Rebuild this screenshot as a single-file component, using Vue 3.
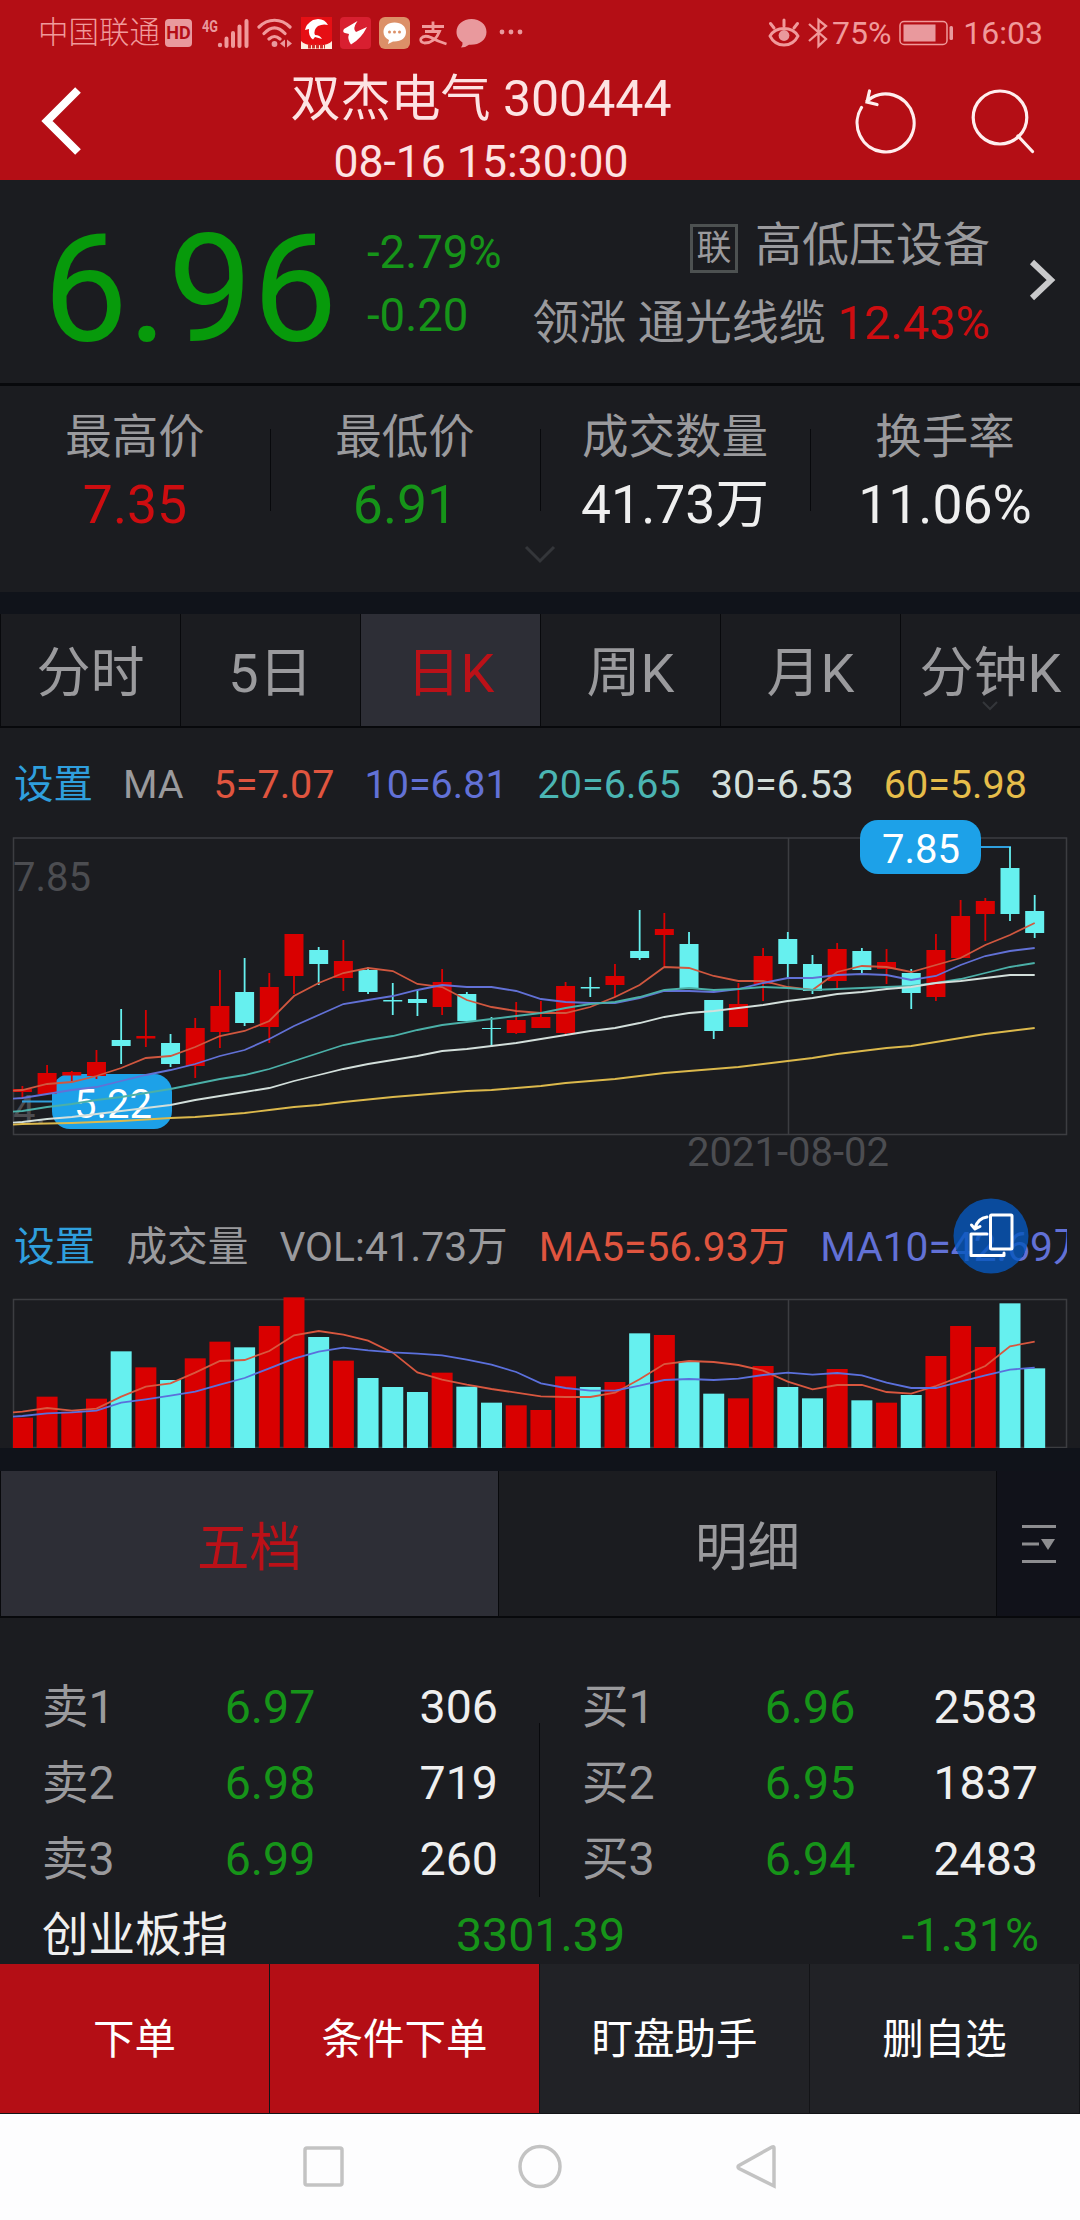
<template>
  <div class="phone">
    <div class="status">
      <span class="carrier">中国联通</span>
      <span class="hd">HD</span>
      <svg class="signal" width="47" height="32" viewBox="0 0 47 32">
        <text x="0" y="15" font-size="17" font-weight="700" textLength="16" lengthAdjust="spacingAndGlyphs">4G</text>
        <circle cx="18" cy="28" r="2.2" />
        <path d="M24.5 29V21.500M31 29V16M37.500 29V9.500M44.500 29V4" stroke-width="4" stroke-linecap="round" class="line" />
      </svg>
      <svg class="wifi" width="36" height="32" viewBox="0 0 36 32">
        <path d="M2 10C11 1 24 1 33 10M7 16.500C14 9 21 9 28 16.500M12 22C16 18.500 19 18.500 23 22" class="line" stroke-width="3.200" stroke-linecap="round" />
        <circle cx="17.500" cy="27" r="2.900" />
        <path d="M23 26.500l5-4v8zM35 26.500l-5-4v8z" />
      </svg>
      <svg width="31" height="32" viewBox="0 0 31 32">
        <rect width="31" height="32" fill="#e60f14" />
        <path d="M0 24Q4 29 15.500 28Q27 29 31 24V32H0z" fill="#fdeee0" />
        <path d="M27 8Q24 2 17 2L12 3Q5 7 4 13L8 12Q7 19 12 22.500L14 20L21 22Q19 18 14 18Q12 13 17 9Q22 6.500 27 8z" fill="#fff" />
        <path d="M7 29.500H24" stroke="#d3302b" stroke-width="4" stroke-dasharray="3 1" />
      </svg>
      <svg width="31" height="32" viewBox="0 0 31 32">
        <rect width="31" height="32" rx="4" fill="#d81f30" />
        <path d="M17.500 4L4 12Q2 15 5 16L9 17Q7 22 11 27.500Q21 22 27 10L16 15Q12 12 17.500 4z" fill="#fff" />
      </svg>
      <svg width="31" height="32" viewBox="0 0 31 32">
        <rect width="31" height="32" rx="6" fill="#dc9068" />
        <path d="M15.500 5.500C8.500 5.500 4.500 9.500 4.500 15C4.500 18.500 6.500 21.500 10 23L9 27L14 24.500C22 25 27 21 27 15C27 9.500 22.500 5.500 15.500 5.500z" fill="#fff" />
        <g fill="#dc9068"><circle cx="10.500" cy="15" r="1.500" /><circle cx="15.500" cy="15" r="1.500" /><circle cx="20.500" cy="15" r="1.500" /></g>
      </svg>
      <svg width="30" height="32" viewBox="0 0 30 32">
        <path d="M4 9.500H26M15 4.500V14M7 14.500H21.500Q17 26 6.500 26Q1.500 25 3 21.500Q6 17.500 13 20.500Q20 24.500 28.500 27" class="line" stroke-width="2.800" />
      </svg>
      <svg width="31" height="32" viewBox="0 0 31 32">
        <path d="M15.500 2C7 2 0.500 7.500 0.500 15C0.500 19.500 3 23 6.500 25.500Q7 28 5 30.500Q10 30.500 13 27.800C23 28.500 30.500 23 30.500 15C30.500 7.500 24 2 15.500 2z" />
      </svg>
      <svg class="more" width="25" height="32" viewBox="0 0 25 32">
        <circle cx="3" cy="15" r="2.400" /><circle cx="12" cy="15" r="2.400" /><circle cx="21" cy="15" r="2.400" />
      </svg>
      <div class="status-right">
        <svg width="32" height="32" viewBox="0 0 32 32">
          <path d="M2 19C8 9 24 9 30 19C24 31 8 31 2 19z" class="line" stroke-width="2.800" />
          <circle cx="16" cy="18.500" r="5.400" />
          <path d="M16 9V3M6 11L2.500 6.500M26 11L29.500 6.500" class="line" stroke-width="3" stroke-linecap="round" />
        </svg>
        <svg class="bt" width="20" height="32" viewBox="0 0 20 32">
          <path d="M1 7L18 22L10.500 29V3L18 9L1 24" class="line" stroke-width="2.300" />
        </svg>
        <span>75%</span>
        <svg class="battery" width="55" height="32" viewBox="0 0 55 32">
          <rect x="1" y="4.500" width="47" height="23" rx="4" class="line" stroke-width="1.500" />
          <rect x="4.500" y="7.500" width="32" height="17" />
          <rect x="50.500" y="9" width="3.500" height="14" rx="1.500" />
        </svg>
        <span>16:03</span>
      </div>
    </div>

    <header class="header">
      <svg class="back" width="44" height="72" viewBox="0 0 44 72">
        <path d="M37 5L6 36L37 67" stroke="#fff" stroke-width="8" fill="none" />
      </svg>
      <div class="title">
        <div class="name">双杰电气 300444</div>
        <div class="time">08-16 15:30:00</div>
      </div>
      <div class="tools">
        <svg width="62" height="66" viewBox="0 0 62 66">
          <path d="M6.500 18.500A28.500 29 0 1 0 12 12M14.500 2L12 13L22 15.500" />
        </svg>
        <svg width="64" height="66" viewBox="0 0 64 66">
          <ellipse cx="29" cy="28.500" rx="26.800" ry="26.500" /><path d="M47 47L61.500 62.500" />
        </svg>
      </div>
    </header>

    <section class="quote">
      <div class="price">6.96</div>
      <div class="change">
        <div>-2.79%</div>
        <div>-0.20</div>
      </div>
      <div class="sector">
        <div class="sector-row"><span class="tag">联</span>高低压设备</div>
        <div class="sector-row">领涨 通光线缆 <span class="red">12.43%</span></div>
      </div>
      <svg class="go" width="28" height="42" viewBox="0 0 28 42">
        <path d="M3 3L22 21L3 39" fill="none" stroke="#c9c9cb" stroke-width="6" />
      </svg>
    </section>

    <section class="stats">
      <div v-for="s in stats" :key="s.label" class="stat">
        <div class="label">{{ s.label }}</div>
        <div class="value" :class="s.tone">{{ s.value }}</div>
      </div>
      <svg class="expand" width="34" height="20" viewBox="0 0 34 20">
        <path d="M3 3L17 17L31 3" fill="none" stroke="#34363a" stroke-width="3" />
      </svg>
    </section>

    <nav class="periods">
      <div v-for="p in periods" :key="p" class="period" :class="{ active: p === '日K' }">
        {{ p }}
        <svg v-if="p === '分钟K'" class="caret" width="16" height="10" viewBox="0 0 16 10">
          <path d="M1 1L8 8L15 1" fill="none" stroke="#34363a" stroke-width="2" />
        </svg>
      </div>
    </nav>

    <div class="legend">
      <span class="set">设置</span>
      <span class="gray">MA</span>
      <span class="ma5">5=7.07</span>
      <span class="ma10">10=6.81</span>
      <span class="ma20">20=6.65</span>
      <span class="ma30">30=6.53</span>
      <span class="ma60">60=5.98</span>
    </div>
    <svg class="chart" width="1080" height="370" viewBox="0 0 1080 370">
      <path d="M13.500 18H1066.500V314.500H13.500zM788.500 18V314" class="frame" />
      <text x="13" y="71" class="axis">7.85</text>
      <text x="13" y="304" class="axis">4.</text>
      <text x="788" y="346" text-anchor="middle" class="axis">2021-08-02</text>
      <rect x="52" y="254" width="120" height="55" rx="18" class="bubble" />
      <path d="M22 281.500H52M981 27H1011" class="lead" />
      <g v-for="(c, i) in candles" :key="i" :fill="c[0] ? red : cyan">
        <rect :x="cx(i) - 0.9" :y="c[1]" width="1.800" :height="c[4] - c[1]" />
        <rect :x="cx(i) - 9.500" :y="c[2]" width="19" :height="c[3] - c[2]" />
      </g>
      <text x="113" y="298" text-anchor="middle" class="mark">5.22</text>
      <polyline v-for="l in priceLines" :key="l.color" :points="points(l.y)" :stroke="l.color" class="curve" />
      <rect x="860" y="0" width="121" height="54" rx="18" class="bubble" />
      <text x="921" y="43" text-anchor="middle" class="mark">7.85</text>
    </svg>

    <div class="legend volume">
      <span class="set">设置</span>
      <span class="gray">成交量</span>
      <span class="gray">VOL:41.73万</span>
      <span class="ma5">MA5=56.93万</span>
      <span class="ma10">MA10=42.69万</span>
      <svg class="rotate" width="76" height="76" viewBox="0 0 76 76">
        <circle cx="38" cy="38" r="37.500" fill="#0658bd" fill-opacity="0.800" />
        <g fill="none" stroke="#fff" stroke-width="3" stroke-linejoin="round" stroke-linecap="round">
          <rect x="37.500" y="17" width="21.500" height="34" rx="1" />
          <path d="M34 36H18V57.500H51V55" />
          <path d="M34 19Q25 20 22 30M18.500 27L22 31L27 28.500" />
        </g>
      </svg>
    </div>
    <svg class="chart" width="1080" height="158" viewBox="0 0 1080 158">
      <path d="M13.500 9.500H1066.500V157.500H13.500zM788.500 9.500V157" class="frame" />
      <rect
        v-for="(v, i) in volumes"
        :key="i"
        :x="Math.max(cx(i) - 10.5, 13)"
        :y="v / 3 - 100"
        :width="i ? 21 : 20"
        :height="258 - v / 3"
        :fill="candles[i][0] ? red : cyan"
      />
      <polyline v-for="l in volumeLines" :key="l.color" :points="points(l.y.map(y => y / 3 - 100))" :stroke="l.color" class="curve" />
    </svg>

    <nav class="book-tabs">
      <div class="book-tab active">五档</div>
      <div class="book-tab">明细</div>
      <div class="book-menu">
        <svg width="36" height="40" viewBox="0 0 36 40">
          <path d="M1 2.500H35M1 20H18M1 37.500H35" stroke="#8d8d90" stroke-width="3" />
          <path d="M20 15H34L27 26z" fill="#8d8d90" />
        </svg>
      </div>
    </nav>

    <section class="book">
      <div v-for="side in book" :key="side.name" class="side">
        <div v-for="(row, i) in side.rows" :key="i" class="row">
          <span class="level">{{ side.name }}{{ i + 1 }}</span>
          <span class="green bid">{{ row[0] }}</span>
          <span class="qty">{{ row[1] }}</span>
        </div>
      </div>
    </section>
    <div class="index">
      <span>创业板指</span>
      <span class="green">3301.39</span>
      <span class="green last">-1.31%</span>
    </div>

    <footer class="actions">
      <div class="action hot">下单</div>
      <div class="action hot">条件下单</div>
      <div class="action">盯盘助手</div>
      <div class="action">删自选</div>
    </footer>
    <div class="sysnav">
      <svg width="44" height="46" viewBox="0 0 44 46"><rect x="3" y="4" width="37" height="37" rx="2" /></svg>
      <svg width="44" height="46" viewBox="0 0 44 46"><circle cx="22" cy="22.500" r="20" /></svg>
      <svg width="44" height="46" viewBox="0 0 44 46"><path d="M40 3.500V42L5 24.500Q3 23 5 21.500L38 3Q40 2 40 4z" /></svg>
    </div>
  </div>
</template>

<script setup>
const red = '#d90000';
const cyan = '#66f0ef';

const stats = [
  { label: '最高价', value: '7.35', tone: 'red' },
  { label: '最低价', value: '6.91', tone: 'green' },
  { label: '成交数量', value: '41.73万' },
  { label: '换手率', value: '11.06%' },
];

const periods = ['分时', '5日', '日K', '周K', '月K', '分钟K'];

// [up, high, bodyTop, bodyBottom, low]
const candles = [
  [1, 266, 269, 272, 279], [1, 245, 253, 274, 274], [1, 251, 252, 255.5, 261], [1, 230, 242, 256, 259],
  [0, 189, 220, 226, 244], [1, 190, 216, 218.5, 227], [0, 214, 223, 244, 247], [1, 198, 208, 246, 258],
  [1, 150, 186, 212, 228], [0, 138, 172, 203, 206], [1, 153, 167, 207, 223], [1, 114, 114, 156, 174],
  [0, 127, 130, 144, 165], [1, 120, 141, 158, 171], [0, 147, 150, 172, 174], [0, 163, 180, 181.5, 195],
  [0, 170, 179, 183, 196], [1, 149, 162, 187, 195], [0, 172, 174, 201, 201], [0, 197, 208, 209, 227],
  [1, 182, 200, 213, 214], [1, 181, 197, 208, 208], [1, 162, 166, 213, 215], [0, 157, 167, 168.5, 177],
  [1, 144, 156, 165, 177], [0, 90, 131, 138, 140], [1, 93, 109, 115, 146], [0, 112, 124, 168, 168],
  [0, 180, 180, 211, 219], [1, 163, 184, 207, 207], [1, 128, 136, 164, 181], [0, 112, 119, 144, 158],
  [0, 135, 144, 171, 174], [1, 123, 129, 161, 168], [0, 128, 131, 150, 155], [1, 129, 142, 149, 164],
  [0, 149, 153, 173, 189], [1, 114, 130, 177, 181], [1, 80, 96, 138, 138], [1, 78, 81, 94, 121],
  [0, 27, 48, 94, 101], [0, 75, 91, 113, 118],
];

const priceLines = [
  { color: '#d0573f', y: [270, 264, 262, 256, 248, 238, 236, 227, 216, 211, 201, 176, 163, 153, 148, 151, 164, 167, 180, 187, 191, 193, 193, 187, 177, 165, 147, 148, 156, 161, 161, 167, 170, 152, 146, 147, 152, 145, 138, 125, 115, 103] },
  { color: '#6271d6', y: [278, 274, 270, 267, 261, 255, 250, 244, 236, 230, 219, 206, 195, 184, 180, 176, 170, 165, 167, 167, 171, 179, 182, 183, 183, 178, 171, 171, 172, 169, 163, 158, 158, 155, 154, 155, 160, 156, 145, 136, 131, 128] },
  { color: '#4bb0a8', y: [291, 287, 284, 280, 277, 273, 269, 264, 259, 255, 249, 241, 233, 225, 220, 216, 210, 205, 202, 199, 196, 193, 188, 184, 182, 177, 170, 168, 170, 169, 167, 168, 170, 169, 168, 167, 166, 163, 159, 153, 147, 143] },
  { color: '#d3dfdb', y: [302, 299, 297, 294, 291, 288, 285, 280, 276, 272, 268, 261, 255, 249, 244, 240, 236, 231, 229, 226, 223, 219, 215, 211, 208, 203, 197, 193, 191, 188, 185, 181, 178, 174, 172, 169, 167, 163, 161, 158, 155, 155] },
  { color: '#dcb94c', y: [304, 303.5, 303, 302, 301, 299.5, 298, 297, 295, 293, 290, 287, 285, 282, 279.5, 277, 275, 273, 271, 270, 268, 266, 263, 261, 259, 256, 253, 251, 249, 247, 244, 241, 238, 234, 231, 228, 226, 222, 218, 214, 211, 208] },
];

const volumes = [
  683, 620, 665, 626, 484, 532, 570, 505, 455, 472, 408, 322, 441, 512, 564, 591, 606, 548, 590, 638, 646,
  660, 559, 591, 576, 430, 435, 515, 611, 625, 528, 591, 625, 537, 631, 638, 615, 498, 408, 471, 340, 535,
];

const volumeLines = [
  { color: '#d8573f', y: [665, 654, 662, 656, 620, 590, 580, 548, 513, 510, 483, 436, 423, 434, 452, 488, 547, 569, 584, 597, 608, 619, 621, 621, 608, 568, 522, 513, 516, 525, 542, 575, 598, 585, 585, 606, 611, 588, 560, 528, 469, 455] },
  { color: '#5b70dc', y: [678, 670, 667, 662, 638, 628, 617, 605, 584, 564, 535, 506, 485, 473, 481, 487, 491, 496, 509, 524, 546, 580, 594, 602, 602, 587, 570, 567, 570, 566, 555, 548, 554, 549, 556, 578, 594, 594, 575, 556, 539, 533] },
];

const book = [
  { name: '卖', rows: [['6.97', '306'], ['6.98', '719'], ['6.99', '260']] },
  { name: '买', rows: [['6.96', '2583'], ['6.95', '1837'], ['6.94', '2483']] },
];

const cx = (i) => 22.4 + i * 24.69;

const points = (ys) => `13,${ys[0] + 0.7} ` + ys.map((y, i) => `${cx(i).toFixed(1)},${y}`).join(' ');
</script>

<style>
body {
  background: #1b1c20;
}
</style>

<style scoped>
.phone {
  width: 1080px;
  height: 2220px;
  overflow: hidden;
  background: #1b1c20;
  color: #9a9a9d;
  font-family: Roboto, "Noto Sans CJK SC", sans-serif;
  font-weight: 400;
}
.phone div {
  box-sizing: border-box;
}
svg {
  flex: none;
  display: block;
}
.red {
  color: #cd0d10;
}
.green {
  color: #169419;
}

.status {
  display: flex;
  align-items: center;
  height: 66px;
  padding: 0 37px 0 38px;
  background: #b40e15;
  color: #f09a9b;
  fill: #e9999d;
  font-size: 32px;
  line-height: 66px;
  gap: 8px;
  white-space: nowrap;
}
.line {
  fill: none;
  stroke: #f09a9b;
}
.carrier {
  font-size: 30.500px;
  margin-right: -3px;
  font-weight: 300;
}
.hd {
  width: 27px;
  height: 28px;
  border-radius: 4px;
  background: #e9999d;
  color: #b40e15;
  font-size: 18px;
  font-weight: 700;
  line-height: 28px;
  text-align: center;
}
.signal {
  margin-left: 2px;
}
.more {
  margin-left: 4px;
}
.status-right {
  display: flex;
  align-items: center;
  margin-left: auto;
}
.bt {
  margin-left: 8px;
  margin-right: 4px;
}
.battery {
  margin: 0 9px 0 8px;
}

.header {
  display: grid;
  grid-template-columns: 110px 1fr 228px;
  height: 114px;
  background: #b40e15;
  color: #fde3e3;
}
.back {
  margin: 19px 0 0 41px;
}
.title {
  text-align: center;
  white-space: nowrap;
}
.name {
  font-size: 50px;
  line-height: 66px;
}
.time {
  font-size: 44.500px;
  line-height: 60px;
}
.tools {
  display: flex;
  gap: 54px;
  padding: 23px 0 0 3px;
  fill: none;
  stroke: #ffeeee;
  stroke-width: 3.200;
  stroke-linecap: round;
}

.quote {
  display: flex;
  height: 203px;
  color: #9a9a9d;
  white-space: nowrap;
}
.price {
  width: 367px;
  padding: 8px 0 0 43px;
  color: #079a0b;
  font-size: 151px;
  line-height: 203px;
}
.change {
  padding-top: 41px;
  color: #169419;
  font-size: 45.500px;
  line-height: 63px;
}
.sector {
  flex: 1;
  padding-top: 26px;
  text-align: right;
  font-size: 47px;
  line-height: 78px;
}
.sector-row {
  height: 78px;
}
.tag {
  display: inline-block;
  width: 48px;
  height: 49px;
  margin-right: 17px;
  border: 3px solid #4d5151;
  box-sizing: border-box;
  font-size: 35px;
  line-height: 43px;
  text-align: center;
  vertical-align: 1px;
}
.go {
  margin: 79px 23px 0 39px;
}

.stats {
  position: relative;
  display: flex;
  height: 209px;
  padding-top: 17px;
  border-top: 3px solid #08090c;
  box-sizing: border-box;
}
.stat {
  width: 270px;
  text-align: center;
  line-height: 68px;
}
.stat + .stat {
  background: linear-gradient(#08090c, #08090c) 0 26px / 1px 82px no-repeat;
}
.label {
  font-size: 46.500px;
}
.value {
  font-size: 53.500px;
  color: #efefef;
}
.value.red {
  color: #cd0d10;
}
.value.green {
  color: #169419;
}
.expand {
  position: absolute;
  left: 523px;
  bottom: 28px;
}

.periods {
  display: flex;
  height: 136px;
  border-top: 22px solid #10131a;
  border-bottom: 2px solid #08090c;
  box-sizing: border-box;
}
.period {
  position: relative;
  width: 180px;
  padding-top: 6px;
  border-left: 1px solid #08090c;
  font-size: 54px;
  line-height: 108px;
  text-align: center;
  white-space: nowrap;
}
.period.active,
.book-tab.active {
  background: #2d2e36;
  color: #bb1118;
}
.caret {
  position: absolute;
  left: 81px;
  bottom: 15px;
}

.legend {
  position: relative;
  display: flex;
  gap: 30px;
  height: 92px;
  padding: 37px 0 0 14px;
  font-size: 39.500px;
  line-height: 40px;
  white-space: nowrap;
}
.legend.volume {
  width: 1067px;
  height: 100px;
  gap: 31px;
  font-size: 40.700px;
  overflow: hidden;
}
.set {
  color: #2f9fdd;
}
.gray {
  color: #9a9a9d;
}
.ma5 {
  color: #e0553f;
}
.ma10 {
  color: #6271d6;
}
.ma20 {
  color: #4bb5b3;
}
.ma30 {
  color: #d3dfdb;
}
.ma60 {
  color: #e6bd4a;
}
.rotate {
  position: absolute;
  left: 953px;
  top: 8px;
}

.frame {
  fill: none;
  stroke: #3c3d41;
  stroke-width: 1.500;
}
.axis {
  fill: #4c4d51;
  font-size: 40px;
}
.mark {
  fill: #fff;
  font-size: 40px;
}
.bubble {
  fill: #1da1e8;
}
.lead {
  stroke: #2f9fdd;
  stroke-width: 2;
}
.curve {
  fill: none;
  stroke-width: 1.800;
}

.book-tabs {
  display: flex;
  height: 170px;
  border-top: 23px solid #10131a;
  border-bottom: 2px solid #08090c;
  box-sizing: border-box;
}
.book-tab {
  width: 498px;
  padding-top: 5px;
  border-left: 1px solid #08090c;
  font-size: 52.500px;
  line-height: 145px;
  text-align: center;
}
.book-menu {
  width: 84px;
  padding: 53px 0 0 24px;
  background: #11121a;
  border-left: 1px solid #08090c;
}

.book {
  display: flex;
  height: 279px;
  padding-top: 51px;
  box-sizing: border-box;
  background: linear-gradient(#08090c, #08090c) 539px 105px / 1px 177px no-repeat;
}
.side {
  width: 541px;
  padding: 0 42px 0 42px;
  font-size: 46.500px;
  line-height: 76px;
}
.row {
  display: flex;
  justify-content: space-between;
}
.level {
  width: 150px;
}
.bid {
  width: 150px;
  text-align: center;
}
.qty {
  width: 150px;
  color: #efefef;
  text-align: right;
}
.index {
  display: flex;
  justify-content: space-between;
  height: 67px;
  padding: 0 41px 0 42px;
  color: #efefef;
  font-size: 46.500px;
  line-height: 76px;
}
.index span {
  width: 260px;
}
.index .green {
  color: #169419;
  text-align: center;
}
.index .last {
  text-align: right;
}

.actions {
  display: flex;
  height: 150px;
}
.action {
  width: 270px;
  border-right: 1px solid #131417;
  border-bottom: 1px solid #131417;
  background: #212226;
  color: #fff;
  font-size: 41.500px;
  line-height: 151px;
  text-align: center;
}
.action.hot {
  background: #b40e15;
}

.sysnav {
  display: flex;
  justify-content: center;
  gap: 172px;
  height: 106px;
  padding-top: 30px;
  background: #fdfdfe;
  fill: none;
  stroke: #c3c3c3;
  stroke-width: 3.500;
}
</style>
